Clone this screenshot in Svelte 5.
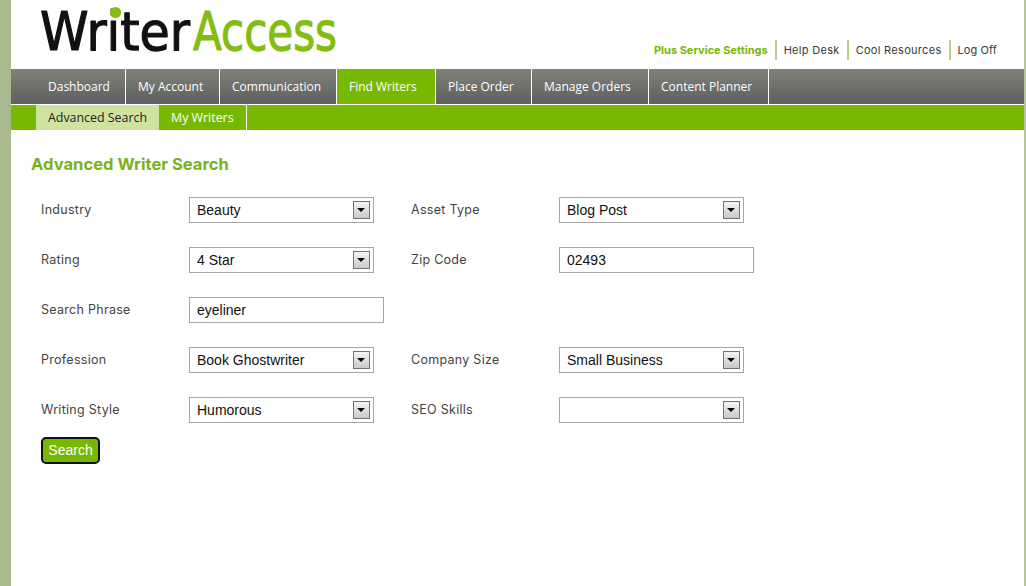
<script>
  const nav = [
    { label: 'Dashboard', width: 115 },
    { label: 'My Account', width: 94 },
    { label: 'Communication', width: 117 },
    { label: 'Find Writers', width: 99 },
    { label: 'Place Order', width: 96 },
    { label: 'Manage Orders', width: 117 },
    { label: 'Content Planner', width: 120 }
  ];
  const links = ['Help Desk', 'Cool Resources', 'Log Off'];
  const rows = [
    [{ label: 'Industry', type: 'select', value: 'Beauty' }, { label: 'Asset Type', type: 'select', value: 'Blog Post' }],
    [{ label: 'Rating', type: 'select', value: '4 Star' }, { label: 'Zip Code', type: 'input', value: '02493' }],
    [{ label: 'Search Phrase', type: 'input', value: 'eyeliner' }],
    [{ label: 'Profession', type: 'select', value: 'Book Ghostwriter' }, { label: 'Company Size', type: 'select', value: 'Small Business' }],
    [{ label: 'Writing Style', type: 'select', value: 'Humorous' }, { label: 'SEO Skills', type: 'select', value: '' }]
  ];
</script>

<div class="page">
  <header class="top">
    <svg class="logo" width="300" height="50" viewBox="0 0 300 50" role="img" aria-label="WriterAccess">
      <text x="0" y="45" class="w" textLength="150" lengthAdjust="spacingAndGlyphs">Writer</text>
      <text x="153" y="45" class="a" textLength="144" lengthAdjust="spacingAndGlyphs">Access</text>
      <circle cx="75.5" cy="7.5" r="5.6" fill="#84bd12" />
    </svg>
    <div class="links">
      <a href="#top" class="plus">Plus Service Settings</a>
      {#each links as l}
        <a href="#top">{l}</a>
      {/each}
    </div>
  </header>

  <nav class="main">
    {#each nav as item, i}
      <a href="#top" class:first={i === 0} class:on={item.label === 'Find Writers'} style:width="{item.width}px">{item.label}</a>
    {/each}
  </nav>
  <nav class="sub">
    <a href="#top" class="on">Advanced Search</a>
    <a href="#top">My Writers</a>
  </nav>

  <main class="content">
    <h1>Advanced Writer Search</h1>
    <form class="form">
      {#each rows as row}
        <div class="row">
          {#each row as f}
            <div class="field">
              <label for={f.label}>{f.label}</label>
              {#if f.type === 'select'}
                <div class="sel">
                  <select id={f.label} value={f.value}>
                    <option value={f.value}>{f.value}</option>
                  </select>
                  <span class="arrow"><i></i></span>
                </div>
              {:else}
                <input id={f.label} value={f.value} />
              {/if}
            </div>
          {/each}
        </div>
      {/each}
      <button type="button">Search</button>
    </form>
  </main>
</div>

<style>
  :global(body) { margin: 0; background: #fff; }
  .page {
    box-sizing: border-box;
    height: 586px;
    overflow: hidden;
    border-left: 11px solid #a9b98e;
    border-right: 2px solid #b4c49c;
    font-family: "Open Sans", "Liberation Sans", sans-serif;
  }
  .top {
    height: 69px;
    box-sizing: border-box;
    display: flex;
    justify-content: space-between;
    align-items: flex-start;
    padding: 0 20px 0 29px;
  }
  .logo { margin-top: 5px; display: block; overflow: visible; }
  .logo text {
    font-family: "DejaVu Sans", sans-serif;
    font-size: 53px;
    stroke-width: 1.2px;
    stroke-linejoin: round;
    stroke-linecap: round;
  }
  .w { fill: #111; stroke: #111; }
  .a { fill: #84bd12; stroke: #84bd12; }
  .links { display: flex; margin-top: 40px; height: 20px; align-items: center; }
  .links a {
    color: #3a3a3a;
    font-family: "Inter", sans-serif;
    font-size: 11px;
    letter-spacing: 0.3px;
    line-height: 20px;
    text-decoration: none;
    padding: 0 7px;
    border-left: 2px solid #b9cf8c;
  }
  .links a:last-child { letter-spacing: 0.1px; }
  .links a.plus { color: #76b900; font-weight: 700; letter-spacing: 0; border-left: 0; }
  .main {
    display: flex;
    height: 35px;
    background: linear-gradient(#7f8279, #5e5f5f);
  }
  .main a {
    box-sizing: border-box;
    color: #fff;
    font-size: 12px;
    line-height: 35px;
    text-decoration: none;
    padding-left: 12px;
    border-right: 1px solid #fff;
    white-space: nowrap;
  }
  .main a.first { padding-left: 37px; }
  .main a.on { background: #76b900; }
  .sub {
    display: flex;
    height: 25px;
    margin-top: 1px;
    padding-left: 25px;
    background: #76b900;
  }
  .sub a {
    color: #fff;
    font-size: 12.4px;
    line-height: 25px;
    text-decoration: none;
    padding: 0 12px;
    border-right: 1px solid #fff;
  }
  .sub a.on { color: #222; background: #cfe3a1; border-right: 0; }
  .content { padding: 24px 20px 0; }
  h1 {
    margin: 0;
    color: #76b31a;
    font-family: "Inter", sans-serif;
    font-size: 16.6px;
    font-weight: 700;
    line-height: 20px;
  }
  .form {
    display: flex;
    flex-direction: column;
    align-items: flex-start;
    gap: 24px;
    margin-top: 23px;
    padding-left: 10px;
  }
  .row { display: flex; height: 26px; }
  .field { display: flex; width: 370px; align-items: center; }
  label {
    width: 148px;
    color: #444;
    font-family: "Inter", sans-serif;
    font-size: 12.5px;
    letter-spacing: 0.28px;
    margin-top: -2px;
  }
  .sel { position: relative; width: 185px; height: 26px; }
  select, input {
    box-sizing: border-box;
    height: 26px;
    border: 1px solid #a6a6a6;
    background: #fff;
    color: #111;
    font: 14px "Liberation Sans", Arial, sans-serif;
    padding: 0 7px;
    margin: 0;
    border-radius: 0;
    outline: 0;
  }
  select { width: 185px; appearance: none; }
  input { width: 195px; }
  .arrow {
    position: absolute;
    right: 4px;
    top: 4px;
    box-sizing: border-box;
    width: 17px;
    height: 18px;
    border: 1px solid #737373;
    background: linear-gradient(#f4f4f4, #c9c9c9);
    pointer-events: none;
  }
  .arrow i {
    position: absolute;
    left: 3px;
    top: 6px;
    border: 4px solid transparent;
    border-top: 4px solid #000;
    border-bottom: 0;
  }
  button {
    box-sizing: border-box;
    width: 59px;
    height: 27px;
    margin-top: -10px;
    border: 2px solid #111;
    border-radius: 5px;
    background: #76b900;
    color: #fff;
    font: 14px "Liberation Sans", Arial, sans-serif;
    padding: 0 0 2px;
  }
</style>
